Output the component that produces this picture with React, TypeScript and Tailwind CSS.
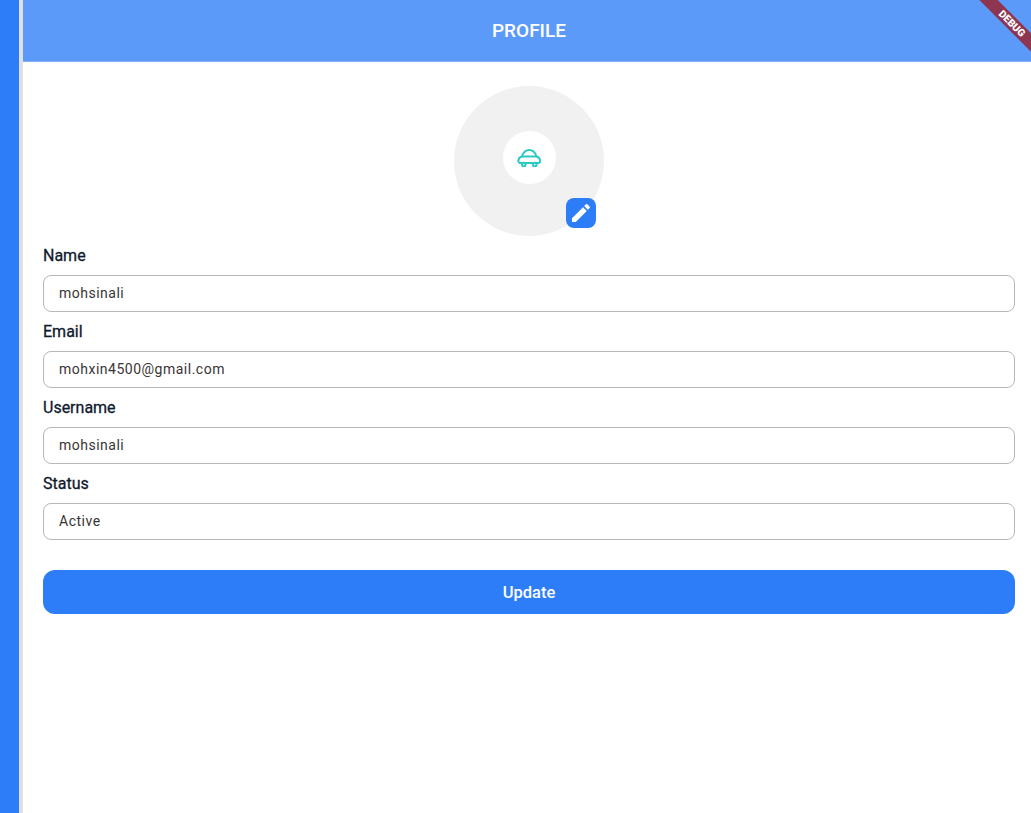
const fields = [
  { label: "Name", value: "mohsinali" },
  { label: "Email", value: "mohxin4500@gmail.com" },
  { label: "Username", value: "mohsinali" },
  { label: "Status", value: "Active" },
];

const CarIcon = () => (
  <svg width="24" height="18" viewBox="0 0 24 18" fill="none" stroke="#2cc9c4" strokeWidth="2" aria-hidden="true">
    <path d="M1.4 11.5C1.6 9.5 3 8 4.8 7.5C6.4 3 9.2 1 12.2 1C15.2 1 18 3 19.6 7.5C21.6 8 23 9.5 23.2 12C23.2 13.5 22.2 14 21.2 14H3.2C2 14 1.2 12.8 1.4 11.5Z" />
    <path d="M4.8 7.5H19.6" />
    <circle cx="6.8" cy="15.6" r="1.8" fill="#fff" />
    <circle cx="17.8" cy="15.6" r="1.8" fill="#fff" />
  </svg>
);

const PencilIcon = () => (
  <svg width="24" height="24" viewBox="0 0 24 24" fill="#fff" aria-hidden="true">
    <path d="M3 17.25V21h3.75L17.81 9.94l-3.75-3.75L3 17.25zM20.71 7.04a1 1 0 0 0 0-1.41l-2.34-2.34a1 1 0 0 0-1.41 0l-1.83 1.83 3.75 3.75 1.83-1.83z" />
  </svg>
);

const App = () => {
  return (
    <div className="relative flex h-[813px] overflow-hidden bg-white font-['Roboto',sans-serif]">
      {/* Left rail */}
      <div className="w-[19px] bg-[#2d7df8]"></div>
      <div className="w-1 bg-[#e0e0e0]"></div>

      <div className="flex flex-1 flex-col">
        <header className="flex h-[62px] items-center justify-center border-b border-[#84aef5] bg-[#5c9afa] pt-[2px] pl-1">
          <h1 className="text-[19px] font-medium text-white">PROFILE</h1>
        </header>

        <main className="flex flex-col pt-6 pr-4 pl-5">
          <div className="relative mx-auto flex h-[150px] w-[150px] items-center justify-center rounded-full bg-[#f1f1f1]">
            <div className="mb-[7px] flex h-[53px] w-[53px] items-center justify-center rounded-full bg-white">
              <CarIcon />
            </div>
            <button className="absolute top-[112px] left-[112px] flex h-[30px] w-[30px] items-center justify-center rounded-lg bg-[#2d7df8]">
              <PencilIcon />
            </button>
          </div>

          {fields.map((field) => (
            <div key={field.label} className="flex flex-col">
              <label className="flex h-[39px] items-center text-base font-normal text-[#0f1a2e] [-webkit-text-stroke:0.3px_#0f1a2e]">
                {field.label}
              </label>
              <div className="flex h-[37px] items-center rounded-lg border border-[#b8b8b8] px-[15px] pb-0.5 text-sm tracking-[0.5px] text-[#3a3535]">
                {field.value}
              </div>
            </div>
          ))}

          <button className="mt-[30px] h-11 rounded-xl bg-[#2d7df8] pt-0.5 text-[16.5px] font-medium text-white">Update</button>
        </main>
      </div>

      {/* Debug ribbon */}
      <div className="absolute top-[17px] right-[-23px] flex h-[13px] w-[84px] rotate-45 items-center justify-center bg-[#8e3550] text-[10.2px] font-black text-white">
        DEBUG
      </div>
    </div>
  );
};

export default App;
